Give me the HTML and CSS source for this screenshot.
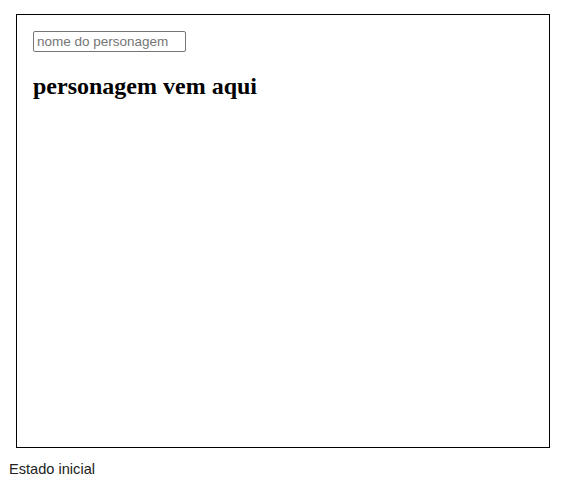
FILE: index.html
```html
<!DOCTYPE html>
<html>
<head>
<meta charset="utf-8">
<link rel="stylesheet" href="styles.css">
</head>
<body>
<div class="frame">
  <input class="search" type="text" placeholder="nome do personagem">
  <h2 class="title">personagem vem aqui</h2>
</div>
<p class="caption">Estado inicial</p>
</body>
</html>
```
FILE: styles.css
```css
html, body {
  margin: 0;
  padding: 0;
  background: #fff;
}
body {
  padding: 14px 0 0 0;
}
.frame {
  box-sizing: border-box;
  margin-left: 16px;
  width: 534px;
  height: 434px;
  border: 1px solid #000;
  padding: 16px;
}
.search {
  display: block;
  box-sizing: border-box;
  width: 153px;
  height: 21px;
  margin: 0;
  padding: 1px 3px;
  border: 1px solid #767676;
  border-radius: 2px;
  font-family: "Liberation Sans", Arial, sans-serif;
  font-size: 13.5px;
  color: #000;
}
.search::placeholder {
  color: #757575;
}
.title {
  margin: 20px 0 0 0;
  font-family: "Liberation Serif", "Times New Roman", serif;
  font-size: 24px;
  font-weight: bold;
  line-height: 28px;
  color: #000;
}
.caption {
  margin: 13px 0 0 9px;
  font-family: "Liberation Sans", Arial, sans-serif;
  font-size: 14.6px;
  line-height: 16px;
  color: #222;
}
```
